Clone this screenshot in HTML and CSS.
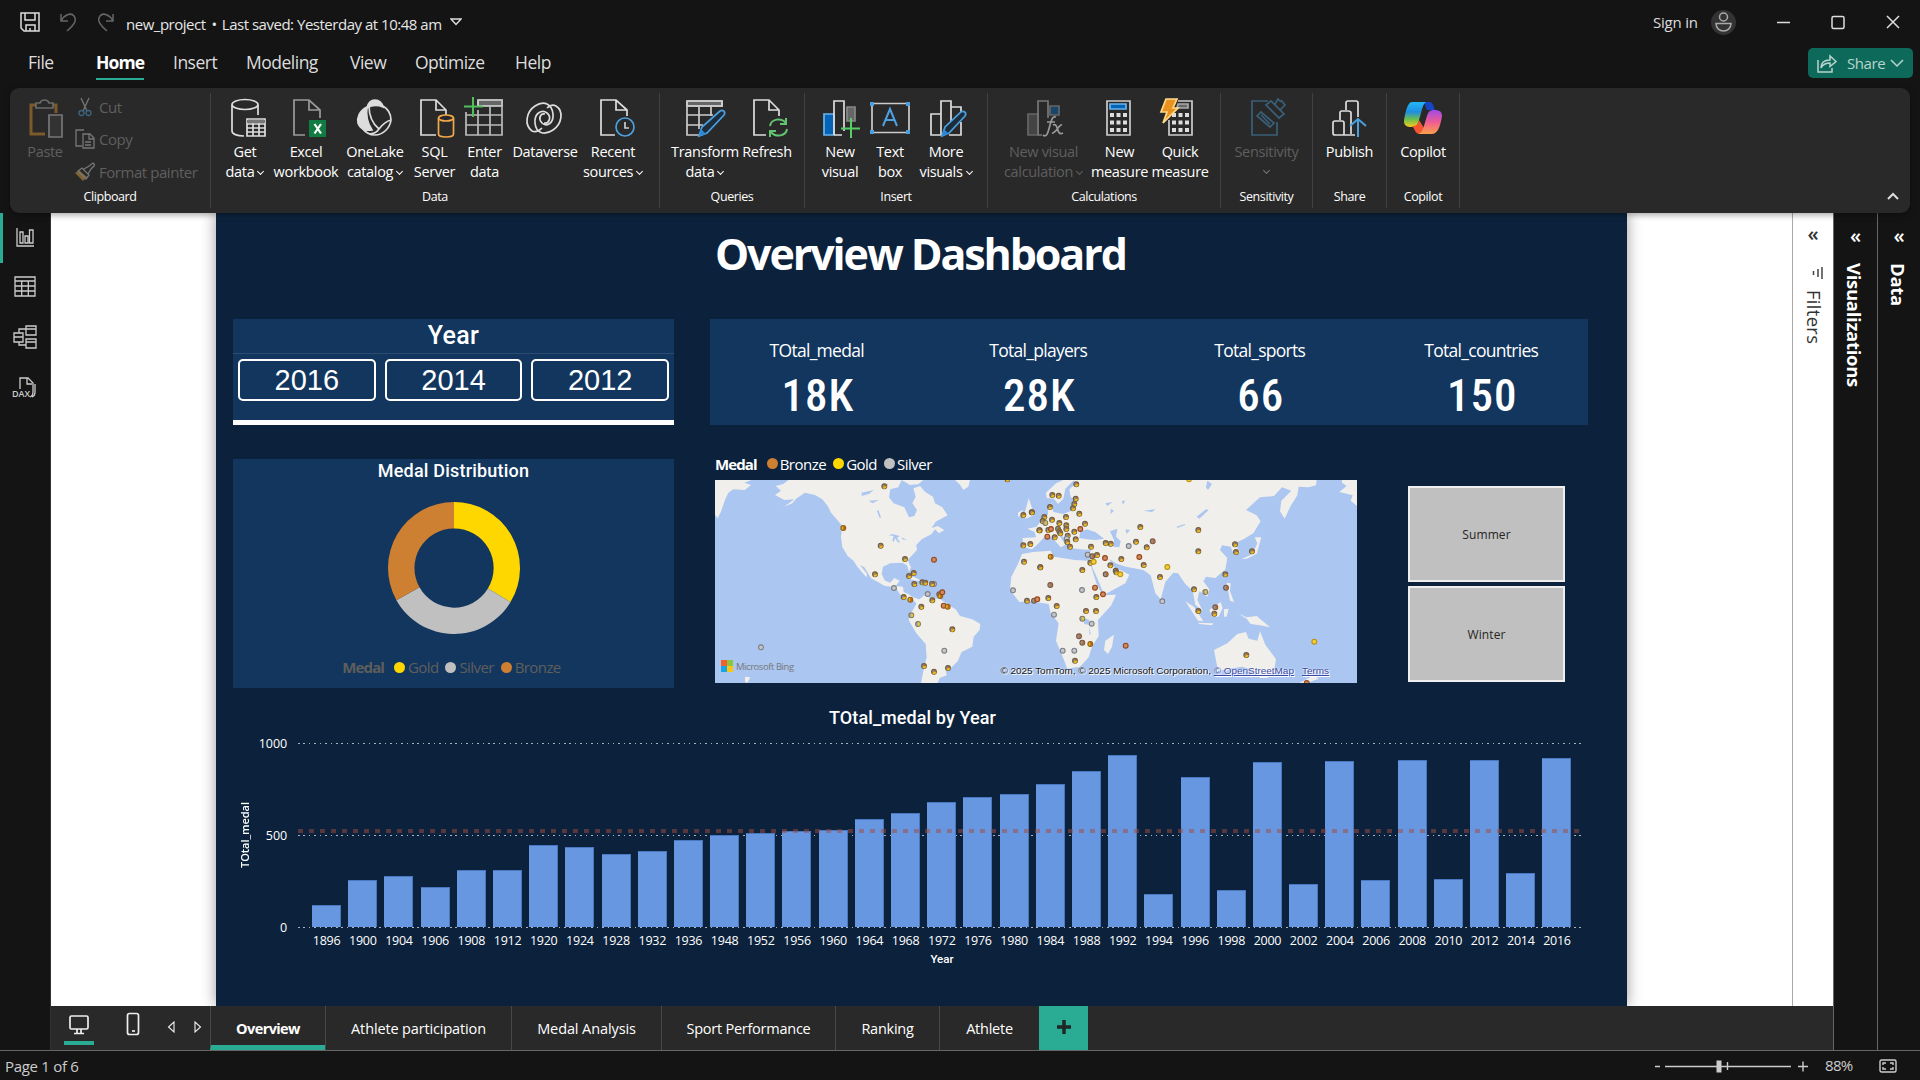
FILE: index.html
```html
<!DOCTYPE html>
<html lang="en">
<head>
<meta charset="utf-8">
<title>new_project</title>
<link rel="stylesheet" href="styles.css">
</head>
<body>
<div class="app">
  <header class="titlebar">
    <svg class="save" viewBox="0 0 20 20"><path d="M1 1h18v18H4l-3-3zM5 1v7h10V1M6 19v-6h9v6M10 19v-3"/></svg>
    <svg class="undo" viewBox="0 0 17 19"><path d="M1 1v7h7M1 8C4 2 11-1 14 3s1 8-7 15"/></svg>
    <svg class="undo redo" viewBox="0 0 17 19"><path d="M1 1v7h7M1 8C4 2 11-1 14 3s1 8-7 15"/></svg>
    <span class="doc">new_project<b>•</b>Last saved: Yesterday at 10:48 am</span>
    <svg class="doc-caret" viewBox="0 0 12 8"><path d="M1 1h10L6 6.500z"/></svg>
    <span class="signin">Sign in</span>
    <svg class="avatar" viewBox="0 0 25 25"><circle cx="12.500" cy="12.500" r="12.500" fill="#333" stroke="none"/><circle cx="12.500" cy="7" r="4" /><path d="M5 13.500h15c0 10-15 10-15 0z"/></svg>
    <svg class="winbtns" viewBox="0 0 124 16"><path d="M1 8.500h13"/><rect x="56" y="2.500" width="12" height="12" rx="1.500"/><path d="M111 2l12 12M123 2l-12 12"/></svg>
  </header>
  <nav class="menu">
    <span class="m-file">File</span><span class="m-home">Home</span><span class="m-insert">Insert</span><span class="m-model">Modeling</span><span class="m-view">View</span><span class="m-opt">Optimize</span><span class="m-help">Help</span>
    <button class="share">
      <svg width="20" height="19" viewBox="0 0 20 19"><path d="M1 6v12h14v-4M4 14c0-6 4-8 9-8V2l6 5.500-6 5V9c-4 0-7 1-9 5z"/></svg>
      <span>Share</span>
      <svg width="14" height="9" viewBox="0 0 14 9"><path d="M1 1l6 6 6-6"/></svg>
    </button>
  </nav>

  <section class="ribbon">
    <div class="group g-clip">
      <div class="items">
        <div class="cmd w70 dim">
          <svg viewBox="0 0 40 40"><path d="M12 7H6v29h14M26 7h5v8" stroke="#7d5a2a" stroke-width="3"/><path d="M11 10V5h4c1-4 8-4 9 0h4v5z" stroke="#6a6a6a" fill="#292929"/><path d="M24 17h13v22H24z" stroke="#777" fill="#333"/></svg>
          <span>Paste</span>
        </div>
        <div class="small dim">
          <div><svg viewBox="0 0 20 20"><path d="M6 1l6 13M14 1L8 14" stroke="#777"/><circle cx="6.500" cy="16" r="2.500" stroke="#3b6680"/><circle cx="13.500" cy="16" r="2.500" stroke="#3b6680"/></svg><span>Cut</span></div>
          <div><svg viewBox="0 0 20 20"><path d="M7 17H1V1h8M8 5h7l4 4v10H8zM14 5v5h5M10 13h6M10 16h6" stroke="#777"/></svg><span>Copy</span></div>
          <div><svg viewBox="0 0 20 20"><path d="M1 11l7 7 3-3-7-6z" fill="#806331" stroke="#806331"/><path d="M3 9l4-3 7 7-3 4zM9 7l5-3 4-3 2 2-4 4-3 5" stroke="#777"/></svg><span>Format painter</span></div>
        </div>
      </div>
      <div class="gname">Clipboard</div>
    </div>

    <div class="group g-data">
      <div class="items">
        <div class="cmd w60"><svg viewBox="-3 0 40 40"><ellipse cx="17" cy="6.500" rx="13" ry="5"/><path d="M4 7v26c0 3 5 5 12 5M30 7v10"/><path d="M19 21h18v17H19zM19 26h18M19 30h18M19 34h18M25 22v16M31 22v16" fill="#292929"/><path d="M19 22h18v3H19z" fill="#777" stroke="none"/></svg><span>Get</span><span>data<i></i></span></div>
        <div class="cmd w62"><svg viewBox="-2 0 40 40"><path d="M17 37H6V2h15l11 10v8M21 2v10h11" stroke="#9a9a9a"/><path d="M21 22h17v17H21z" fill="#107c41" stroke="none"/><path d="M26.500 26l6.500 9.500M33 26l-6.500 9.500" stroke="#fff" stroke-width="2.200"/></svg><span>Excel</span><span>workbook</span></div>
        <div class="cmd w76"><svg viewBox="0 0 40 40"><path d="M12 10C13 5 16 2 20 2s7 3 8 7c-5-2-11-2-16 1z" fill="#ddd"/><path d="M12 9C4 13 2 20 3 25c2 6 8 8 14 7C12 25 11 16 12 9z" fill="#ddd"/><path d="M28 8c5 3 8 8 8 14-1 8-8 15-16 15-5 0-10-3-13-7M14 8c0 10 4 18 10 23 3-4 8-8 12-9M24 31c-2 3-6 5-10 5"/></svg><span>OneLake</span><span>catalog<i></i></span></div>
        <div class="cmd w43"><svg viewBox="-1 0 40 40"><path d="M20 37H5V2h15l10 10v5M20 2v10h10"/><g stroke="#f2a94b"><ellipse cx="30" cy="20" rx="7.500" ry="3"/><path d="M22.500 20v16c0 4 15 4 15 0V20"/></g></svg><span>SQL</span><span>Server</span></div>
        <div class="cmd w57"><svg viewBox="1 0 40 40"><path d="M14 2h24v6H14z" fill="#666"/><path d="M2 14v23h36V2H14M2 17h36M2 27h36M14 12v25M26 8v29" stroke="#bbb"/><path d="M9-1v20M0 8.500h19" stroke="#4fc05c" stroke-width="2"/></svg><span>Enter</span><span>data</span></div>
        <div class="cmd w64"><svg viewBox="1 0 40 40"><path d="M8 33C0 27 2 14 11 8s17-2 18 8-7 13-11 9-2-10 3-9M32 8c8 5 6 18-3 24s-17 3-18-7 7-14 12-10 2 11-3 10M8 33c4 2 8-1 10-3M32 8c-4-2-7 0-9 2"/></svg><span>Dataverse</span></div>
        <div class="cmd w72"><svg viewBox="-3 0 40 40"><path d="M19 37H5V2h15l11 10v6M20 2v10h11"/><circle cx="29" cy="29" r="9" stroke="#4ba0e0"/><path d="M29 24v6h4" stroke="#ccc"/></svg><span>Recent</span><span>sources<i></i></span></div>
      </div>
      <div class="gname">Data</div>
    </div>

    <div class="group g-quer">
      <div class="items">
        <div class="cmd w80"><svg viewBox="0 0 40 40"><path d="M2 3h35v5H2z" fill="#666"/><path d="M2 3h35v6M2 3v34h12M2 8h35M2 17h26M2 27h16M14 8v23M26 8v10" stroke="#ccc"/><path d="M14 38l3-9 18-16c3-2 6 1 4 4L22 35z" stroke="#4ba0e0" fill="#1d2d3c"/><path d="M14 38l2-7 5 5z" fill="#2b88d8" stroke="none"/></svg><span>Transform</span><span>data<i></i></span></div>
        <div class="cmd w44"><svg viewBox="-2 0 40 40"><path d="M17 37H5V2h15l10 10v6M20 2v10h10"/><g stroke="#62c370" stroke-width="2"><path d="M21 28c1-7 11-9 16-3M37 20v6h-6M38 31c-1 7-11 9-16 3M21 39v-6h6"/></g></svg><span>Refresh</span></div>
      </div>
      <div class="gname">Queries</div>
    </div>

    <div class="group g-ins">
      <div class="items">
        <div class="cmd w50"><svg viewBox="0 0 40 40"><path d="M27 9h8v14h-8z" fill="#666" stroke="#888"/><path d="M4 16h10v21H4z" fill="#0563b5" stroke="#6ab4ee"/><path d="M14 37V3h10v30M14 37h8"/><path d="M31 20v20M21 30.500h19" stroke="#55cf66" stroke-width="2"/></svg><span>New</span><span>visual</span></div>
        <div class="cmd w50"><svg viewBox="0 0 40 40"><path d="M2 5.500h37v29H2z" stroke="#ccc"/><g fill="#4ba0e0" stroke="none"><path d="M0 4h4v4H0zM36 4h4v4h-4zM0 32h4v4H0zM36 32h4v4h-4z"/></g><path d="M13 28l7-17 7 17M15 22h10" stroke="#4ba0e0" stroke-width="2"/></svg><span>Text</span><span>box</span></div>
        <div class="cmd w62"><svg viewBox="-1 0 40 40"><path d="M4 16h10v21H4zM14 37V3h10v20M24 9h10v6M34 24v13H22"/><path d="M15 38l3-9 16-15c3-2 6 1 4 4L22 35z" stroke="#4ba0e0" fill="#1d2d3c"/><path d="M15 38l2-7 5 5z" fill="#2b88d8" stroke="none"/></svg><span>More</span><span>visuals<i></i></span></div>
      </div>
      <div class="gname">Insert</div>
    </div>

    <div class="group g-calc">
      <div class="items">
        <div class="cmd w111 dim"><svg viewBox="0 0 40 40"><path d="M26 8h9v9h-9z" fill="#18466b" stroke="#666"/><path d="M4 16h10v21H4z" fill="#444" stroke="#666"/><path d="M14 37V3h10v17M14 37h4" stroke="#777"/><path d="M19 37c4 3 5-3 7-10s3-9 6-8M23 24h8M29 27c6-3 3 12 10 8M38 27c-3-1-6 9-10 8" stroke="#999"/></svg><span>New visual</span><span>calculation<i></i></span></div>
        <div class="cmd w41"><svg viewBox="1 0 40 40"><path d="M8 3h23v34H8z" stroke="#ccc"/><path d="M11 6h16v5H11z" fill="#0563b5" stroke="#6ab4ee"/><path d="M13 15v21M19.500 15v21M26 15v21" stroke="#ddd" stroke-width="4" stroke-dasharray="4 3.500"/></svg><span>New</span><span>measure</span></div>
        <div class="cmd w80"><svg viewBox="0 0 40 40"><path d="M9 22v15h23V3H18" stroke="#ccc"/><path d="M18 6h10v4H17z" fill="#666" stroke="#aaa"/><path d="M14 15v21M20.500 15v21M27 15v21" stroke="#ddd" stroke-width="4" stroke-dasharray="4 3.500"/><path d="M6 1h11l-4 9h5L3 25l4-11H1z" fill="#e9921d" stroke="#ffd98a"/></svg><span>Quick</span><span>measure</span></div>
      </div>
      <div class="gname">Calculations</div>
    </div>

    <div class="group g-sens">
      <div class="items">
        <div class="cmd w91 dim"><svg viewBox="-1 0 40 40"><g stroke="#3a5f78"><path d="M20 3H4v34h25V24"/><path d="M9 18l4-4 13 11-4 4zM13 17l9 9M18 7l5-4 13 13-5 4zM27 6l3-5 3 3M32 12l5-5-4-5"/></g></svg><span>Sensitivity</span><span><i class="solo"></i></span></div>
      </div>
      <div class="gname">Sensitivity</div>
    </div>
    <div class="group g-share">
      <div class="items">
        <div class="cmd w73"><svg viewBox="0 0 40 40"><path d="M16 12V5q0-2 2-2h8q2 0 2 2v14M10 22v-7q0-2 2-2h6q3 0 3 2v21M5 23h7q2 0 2 2v12H5q-2 0-2-2V25q0-2 2-2zM14 37h11"/><path d="M28 39V21M20 28l8-7 8 7" stroke="#4ba0e0" stroke-width="2"/></svg><span>Publish</span></div>
      </div>
      <div class="gname">Share</div>
    </div>
    <div class="group g-cop">
      <div class="items">
        <div class="cmd w72"><svg viewBox="0 0 40 40"><defs><linearGradient id="ca" x1="0" y1="0" x2="0" y2="1"><stop offset="0" stop-color="#22b8f5"/><stop offset=".4" stop-color="#1f8ee0"/><stop offset=".7" stop-color="#6cc04a"/><stop offset="1" stop-color="#f6c820"/></linearGradient><linearGradient id="cb" x1="0" y1="0" x2="0" y2="1"><stop offset="0" stop-color="#a04be8"/><stop offset=".5" stop-color="#ee5c93"/><stop offset="1" stop-color="#fba14a"/></linearGradient></defs><g stroke="none"><path d="M21 4h6c3 0 3 4 5 8h-8z" fill="#1646c8"/><path d="M9 4h14c-4 3-4 9-7 18-1 5-3 7-7 7-6 0-8-2-8-6C2 17 4 4 9 4z" fill="url(#ca)"/><path d="M9 28c5 0 6-2 7-6l5 8-4 6c-5 0-5-5-8-8z" fill="#f4552e"/><path d="M31 12c6 0 8 2 8 6-1 6-3 18-10 18H15c5-1 6-9 9-18 1-4 3-6 7-6z" fill="url(#cb)"/></g></svg><span>Copilot</span></div>
      </div>
      <div class="gname">Copilot</div>
    </div>
    <svg class="collapse" viewBox="0 0 12 8"><path d="M1 7l5-5 5 5"/></svg>
  </section>

  <div class="body">
    <aside class="rail">
      <div class="rail-item on"><svg viewBox="0 0 24 24"><path d="M4 3v18h17M7 18V7h3v11zM12 18v-7h3v7zM16.500 18V5h3.500v13z"/></svg></div>
      <div class="rail-item"><svg viewBox="0 0 24 24"><path d="M2 2h20v19H2zM2 6h20M2 11h20M2 16h20M8.700 6v15M15.300 6v15"/></svg></div>
      <div class="rail-item"><svg viewBox="0 0 24 24"><path d="M1 8h9v9H1zM1 12h9M13 1h10v9H13zM13 4h10M13 14h10v9H13zM13 17h10M6 8V4h7M6 17v3h7"/></svg></div>
      <div class="rail-item dax"><svg viewBox="0 0 24 24"><path d="M7 15V2h8l5 5v9q0 4-3 5M14 2v6h5M22 8v8q0 4-3 5"/></svg><b>DAX</b></div>
    </aside>

    <div class="center">
      <div class="work">
        <div class="canvas">
          <main class="page">
            <h1>Overview Dashboard</h1>
            <div class="row top">
              <section class="year">
                <h2>Year</h2>
                <div class="chips"><span>2016</span><span>2014</span><span>2012</span></div>
              </section>
              <section class="kpis">
                <div><span>TOtal_medal</span><b>18K</b></div>
                <div><span>Total_players</span><b>28K</b></div>
                <div><span>Total_sports</span><b>66</b></div>
                <div><span>Total_countries</span><b>150</b></div>
              </section>
            </div>
            <div class="row mid">
              <section class="dist">
                <h3>Medal Distribution</h3>
                <svg class="donut" width="134" height="134" viewBox="-67 -67 134 134">
                  <path fill="#ffd700" d="M0-66A66 66 0 0 1 56.500 34.100L33.900 20.500A39.500 39.500 0 0 0 0-39.500z"/>
                  <path fill="#c0c0c0" d="M56.500 34.100A66 66 0 0 1-57.600 32.200L-34.500 19.300A39.500 39.500 0 0 0 33.900 20.500z"/>
                  <path fill="#cd7f32" d="M-57.600 32.200A66 66 0 0 1 0-66V-39.500A39.500 39.500 0 0 0-34.500 19.300z"/>
                </svg>
                <div class="legend"><b>Medal</b><i class="gold"></i>Gold<i class="silver"></i>Silver<i class="bronze"></i>Bronze</div>
              </section>
              <section class="mapbox">
                <div class="legend light"><b>Medal</b><i class="bronze"></i>Bronze<i class="gold"></i>Gold<i class="silver"></i>Silver</div>
                <div class="map">
                  <svg width="642" height="203" viewBox="0 0 642 203">
                    <rect width="642" height="203" fill="#abc6f1"/>
                    <g fill="#f0efeb" transform="scale(.33333) translate(-30 -90)">
                      <path d="M30 90H140L118 98 138 105 120 120 85 118 70 128 60 150 48 185 38 205 30 195z"/>
                      <path d="M250 90L235 102 212 108 228 122 210 135 238 150 268 148 235 172 215 180 262 160 275 145 300 128 330 135 352 148 368 168 378 188 395 208 412 228 408 260 412 292 428 318 446 333 458 352 484 382 486 372 465 345 478 352 498 385 540 408 572 412 584 432 600 446 622 448 636 462 648 450 624 442 610 432 596 426 594 410 572 408 584 392 568 384 556 398 540 392 530 372 534 350 556 340 592 338 606 346 612 366 618 352 608 330 636 300 634 285 650 268 680 252 690 238 702 250 718 240 698 228 680 234 692 215 728 196 712 172 690 160 684 140 660 125 645 108 625 115 632 140 622 160 636 180 628 198 612 202 598 172 566 160 552 142 556 118 580 112 590 90z"/>
                      <path d="M590 90H655L640 103 615 105zM750 90H795L790 110 775 120 765 104zM890 90H920L905 92zM604 385L625 380 650 392 632 392zM650 395L690 400 672 406z"/>
                      <path d="M638 452L658 436 676 444 704 446 732 466 752 478 765 498 802 508 826 522 824 540 806 560 802 590 770 606 758 634 738 654 722 656 725 676 704 684 698 699H648L654 668 665 622 662 582 634 550 612 512 612 492 624 480z"/>
                      <path d="M120 680l16 2-8 16-8-2z"/>
                    </g>
                    <g fill="#abc6f1" transform="scale(.33333) translate(-30 -90)">
                      <path d="M470 128l36-8-14 12-22 6zM492 152l30-2-20 10zM520 180l8 22-4 2-8-20zM562 252l22 6-8 6 10 14-8-2-8-12-4 12-4-4 4-14-14-2zM590 262l16 8-14-2zM530 110l20-10-10 16z"/>
                    </g>
                    <g fill="#f0efeb" transform="translate(315 -30) scale(.33333)">
                      <path d="M-22 264L18 262 14 246 -8 236 20 230 38 204 54 194 54 166 66 160 70 186 100 192 124 182 128 164 148 150 122 142 118 118 140 98 130 92 106 116 100 146 84 162 72 146 50 144 48 128 78 100 100 90H860L858 106 836 112 806 110 802 136 782 168 764 206 750 184 754 152 784 122 756 112 732 138 690 142 648 180 680 196 692 214 670 250 640 268 614 280 630 306 612 314 602 290 576 286 570 300 592 324 586 358 556 384 528 380 520 394 538 418 532 440 508 424 502 450 518 482 496 464 488 422 466 402 444 370 430 368 406 396 392 448 376 430 362 376 340 360 288 350 262 342 238 328 254 354 276 362 298 374 286 400 222 434 204 390 184 345 178 322 182 300 150 298 122 294 106 268 84 246 92 262 106 284 92 292 66 262 42 262 26 280 6 298 -20 292z"/>
                      <path d="M-24 312L10 306 62 302 72 320 112 326 134 330 174 332 184 352 200 402 218 436 258 434 244 466 204 510 206 558 186 590 176 622 150 650 112 656 98 620 78 572 86 520 62 490 56 462 0 454 -32 456 -60 420 -56 380 -36 342z"/>
                      <path d="M226 572L252 554 246 590 234 612 222 600zM466 454L492 470 520 514 504 512zM504 518L550 520 546 526 508 522zM538 480L572 456 578 474 566 500 546 500zM582 478L596 476 590 500 582 500zM624 490L650 502 680 498 720 532 690 526 662 522 650 506zM634 328L668 312 682 280 674 262 694 262 686 290 680 312 650 326zM590 398L602 400 600 424 612 456 600 452zM392 448l10 4-4 12-8-2zM584 358l4 8-4 10z"/>
                      <path d="M552 600L592 580 622 552 648 546 656 566 682 572 690 544 706 584 738 628 732 664 712 684 690 684 668 660 636 650 600 656 564 662zM852 676L866 686 830 699H808zM-20 200L-10 168 -4 144 8 180 12 196 -14 206zM-36 188l14-8-2 16-12 4z"/>
                      <path d="M936 90H981V168L962 152 968 136 928 126 950 108 936 98z"/>
                    </g>
                    <g fill="#abc6f1" transform="translate(315 -30) scale(.33333)">
                      <path d="M148 264L150 246 170 238 196 246 222 266 196 270 170 268zM240 244L262 236 258 260 272 274 268 292 250 290 252 270zM286 238l14 2-10 12zM226 160l22-4-16 12zM242 176l10 6-10 10zM500 200l28-22 8 2-28 26zM340 182l36-4-10 8zM276 152l10 0-8 12zM532 92l14 10-12 18-6-8zM162 505l16 4-2 16-14-4zM178 528l4 26-4-2zM440 230l24-8 2 3-24 9z"/>
                    </g>
                    <g id="markers"></g>
                  </svg>
                  <div class="bing"><svg width="12" height="12" viewBox="0 0 12 12"><path fill="#f0612e" d="M0 0h6v6H0z"/><path fill="#8cc63e" d="M6 0h6v6H6z"/><path fill="#16a5e6" d="M0 6h6v6H0z"/><path fill="#fdc50f" d="M6 6h6v6H6z"/></svg>Microsoft Bing</div>
                  <div class="credit">© 2025 TomTom, © 2025 Microsoft Corporation, <u>© OpenStreetMap</u><u class="terms">Terms</u></div>
                </div>
              </section>
              <section class="tiles"><div>Summer</div><div>Winter</div></section>
            </div>
            <section class="chart">
              <h3>TOtal_medal by Year</h3>
              <div class="chart-body">
                <div class="ytitle">TOtal_medal</div>
                <div class="yticks"><span>1000</span><span>500</span><span>0</span></div>
                <div class="plot">
                  <div class="gridlines"><i></i><i></i></div>
                  <div class="bars" id="bars"></div>
                  <div class="baseline"></div>
                  <div class="avg"></div>
                </div>
              </div>
              <div class="xlabels" id="xlabels"></div>
              <div class="xtitle">Year</div>
            </section>
          </main>
        </div>
        <aside class="filters">
          <span class="chev">«</span>
          <svg width="12" height="14" viewBox="0 0 12 14"><path d="M11 1v12M7 3v8M2.500 5v4"/></svg>
          <span class="vt">Filters</span>
        </aside>
      </div>
      <footer class="tabs">
        <div class="views">
          <div class="desk"><svg width="20" height="20" viewBox="0 0 20 20"><rect x="1" y="1" width="18" height="13" rx="1.500"/><path d="M8 14v4M12 14v4M5 18.500h10"/></svg></div>
          <svg class="phone" viewBox="0 0 14 24"><rect x="1.500" y="1.500" width="11" height="21" rx="2"/><path d="M6 19h3"/></svg>
          <svg class="arr" viewBox="0 0 8 12"><path d="M7 1v10L1.500 6z"/></svg>
          <svg class="arr" viewBox="0 0 8 12"><path d="M1 1v10l5.500-5z"/></svg>
        </div>
        <span class="tab t1">Overview</span><span class="tab t2">Athlete participation</span><span class="tab t3">Medal Analysis</span><span class="tab t4">Sport Performance</span><span class="tab t5">Ranking</span><span class="tab t6">Athlete</span>
        <span class="plus"><svg width="14" height="14" viewBox="0 0 14 14"><path d="M7 0v14M0 7h14"/></svg></span>
      </footer>
    </div>
    <aside class="pane"><span class="chev">«</span><span class="vt">Visualizations</span></aside>
    <aside class="pane last"><span class="chev">«</span><span class="vt">Data</span></aside>
  </div>

  <footer class="status">
    <span>Page 1 of 6</span>
    <div class="zoom">
      <svg width="154" height="16" viewBox="0 0 154 16"><path d="M1 8.500h5M11 8.500h126M144 8.500h10M149 3.500v10M73.500 4v8"/><path d="M65 2.500v12" stroke-width="5"/></svg>
      <span>88%</span>
      <svg width="18" height="14" viewBox="0 0 18 14"><rect x="1" y="1" width="16" height="12" rx="1.500"/><path d="M4 6V4h3M14 6V4h-3M4 8v2h3M14 8v2h-3"/></svg>
    </div>
  </footer>
</div>
<script src="app.js"></script>
</body>
</html>
```
FILE: styles.css
```css
* { box-sizing: border-box; }
body { margin: 0; background: #141414; color: #fff; font-family: "Open Sans", "Noto Sans", sans-serif; overflow: hidden; }
svg { fill: none; display: block; flex: none; }
h1, h2, h3 { margin: 0; }
.app { width: 1920px; height: 1080px; display: flex; flex-direction: column; }

.titlebar { height: 44px; display: flex; align-items: center; padding-left: 20px; flex: none; }
.titlebar svg { stroke: #ddd; stroke-width: 1.500; }
.save { width: 20px; height: 20px; }
.titlebar .undo { width: 17px; height: 19px; margin-left: 20px; stroke: #666; }
.titlebar .redo { transform: scaleX(-1); }
.doc { margin-left: 12px; margin-top: 4px; width: 316px; font-size: 15px; letter-spacing: -.48px; color: #e6e6e6; white-space: nowrap; }
.doc b { font-weight: 400; margin: 0 5px 0 6px; }
.doc-caret { width: 12px; height: 8px; margin-left: 8px; }
.signin { margin-left: 1191px; width: 47px; font-size: 15px; letter-spacing: -.2px; color: #ddd; white-space: nowrap; }
.titlebar .avatar { width: 25px; height: 25px; margin-left: 11px; stroke: #aaa; }
.winbtns { width: 124px; height: 16px; margin-left: 40px; }

.menu { height: 44px; display: flex; align-items: flex-start; flex: none; font-size: 17.500px; letter-spacing: -.5px; color: #ddd; padding-left: 28px; }
.menu > span { height: 36px; line-height: 37px; white-space: nowrap; margin-right: 30px; }
.m-file { width: 38px; }
.menu .m-home { width: 48px; font-weight: 700; color: #fff; border-bottom: 2px solid #2aab93; letter-spacing: -.9px; margin-right: 29px; }
.m-insert { width: 43px; }
.m-model { width: 74px; }
.m-view { width: 35px; }
.m-opt { width: 70px; }
.m-help { width: 36px; }
.share { margin: 4px 7px 0 auto; width: 105px; height: 30px; border: 0; border-radius: 5px; background: #0d6a5a; color: #b9d3cd; display: flex; align-items: center; padding: 0 0 0 9px; font: 15px "Open Sans", sans-serif; letter-spacing: -.4px; }
.share svg { stroke: #b9d3cd; stroke-width: 1.500; }
.share span { margin: 0 5px 0 10px; width: 38px; }

.ribbon { margin: 0 10px; height: 125px; background: #292929; border-radius: 9px; display: flex; flex: none; z-index: 2; box-shadow: 0 2px 6px rgba(0,0,0,.35); }
.group { margin: 5px 0; height: 115px; border-right: 1px solid #404040; display: flex; flex-direction: column; flex: none; }
.items { display: flex; height: 93px; padding-top: 5px; }
.gname { text-align: center; font-size: 12.500px; letter-spacing: -.4px; line-height: 22px; }
.g-clip { width: 201px; } .g-data { width: 449px; } .g-quer { width: 145px; } .g-ins { width: 183px; }
.g-calc { width: 233px; } .g-sens { width: 92px; } .g-share { width: 74px; } .g-cop { width: 73px; }
.g-data .items { padding-left: 4px; } .g-quer .items { padding-left: 5px; } .g-ins .items { padding-left: 10px; }
.cmd { display: flex; flex-direction: column; align-items: center; font-size: 14.500px; letter-spacing: -.33px; line-height: 20px; flex: none; }
.cmd svg { width: 40px; height: 40px; margin-bottom: 4px; stroke: #ddd; stroke-width: 1.700; overflow: visible; }
.cmd span { white-space: nowrap; }
.cmd span i { display: inline-block; width: 5px; height: 5px; border: solid currentColor; border-width: 0 1.500px 1.500px 0; transform: rotate(45deg); margin: 0 1px 3px 4px; }
.cmd span i.solo { margin: 0 0 4px; color: #777; }
.dim { color: #5f5f5f; }
.w41 { width: 41px; } .w43 { width: 43px; } .w44 { width: 44px; } .w50 { width: 50px; } .w57 { width: 57px; } .w60 { width: 60px; }
.w62 { width: 62px; } .w64 { width: 64px; } .w70 { width: 70px; } .w72 { width: 72px; } .w73 { width: 73px; } .w76 { width: 76px; }
.w80 { width: 80px; } .w91 { width: 91px; } .w111 { width: 111px; }
.small { display: flex; flex-direction: column; font-size: 15px; letter-spacing: -.45px; margin-left: -5px; }
.small div { display: flex; align-items: center; margin-top: -1px; gap: 4px; white-space: nowrap; }
.small div:first-child { height: 20px; }
.small div:nth-child(2) { height: 46px; }
.small div:nth-child(3) { height: 22px; }
.small svg { width: 20px; height: 20px; stroke-width: 1.300; }
.collapse { width: 12px; height: 8px; margin: 104px 11px 0 auto; stroke: #ddd; stroke-width: 2; }

.body { display: flex; height: 837px; flex: none; }
.rail { width: 51px; border-right: 1px solid #333; }
.rail-item { height: 50px; padding: 0 0 3px 10px; display: flex; align-items: center; border-left: 3px solid transparent; position: relative; }
.rail-item.on { border-color: #2aab93; }
.rail-item svg { width: 24px; height: 24px; stroke: #ccc; stroke-width: 1.300; }
.rail-item.dax { padding-bottom: 1px; }
.dax b { position: absolute; left: 9px; top: 26px; font: 600 9px "Open Sans", sans-serif; background: #141414; color: #ccc; line-height: 9px; }

.center { width: 1782px; display: flex; flex-direction: column; }
.work { display: flex; height: 793px; }
.canvas { width: 1741px; background: #fff; padding: 0 165px; overflow: hidden; }
.page { width: 1411px; height: 793px; background: #0c223c; box-shadow: 0 0 14px rgba(0,0,0,.4); padding: 0 39px 0 17px; }
.page h1 { height: 106px; padding-left: 482px; line-height: 82px; font-size: 43px; font-weight: 700; letter-spacing: -2.100px; white-space: nowrap; }
.row { display: flex; }
.top { height: 106px; margin-bottom: 34px; }
.mid { height: 229px; }
.year { width: 441px; background: #12365e; border-bottom: 5px solid #fff; margin-right: 36px; }
.year h2 { height: 35px; text-align: center; font: 500 25px/34px Roboto, sans-serif; font-stretch: 90%; letter-spacing: .3px; border-bottom: 1px solid #2b4b70; }
.chips { display: flex; gap: 9px; padding: 5px; }
.chips span { flex: 1; height: 42px; border: 2px solid #fff; border-radius: 5px; text-align: center; font: 29px/38px "Liberation Sans", sans-serif; }
.kpis { width: 878px; background: #12365e; display: flex; justify-content: center; }
.kpis div { width: 221.500px; display: flex; flex-direction: column; align-items: center; flex: none; padding-top: 18px; }
.kpis span { font-size: 17.500px; letter-spacing: -.72px; line-height: 26px; }
.kpis b { font: 500 45px/65px Roboto, sans-serif; font-stretch: 85%; letter-spacing: 1px; padding-left: 2px; }
.dist { width: 441px; background: #12365e; display: flex; flex-direction: column; align-items: center; margin-right: 41px; }
.dist h3 { font: 500 18px/23px Roboto, sans-serif; letter-spacing: .2px; }
.donut { margin-top: 19px; }
.legend { display: flex; align-items: center; font-size: 15px; letter-spacing: -.5px; line-height: 20px; color: #605e5c; white-space: nowrap; }
.dist .legend { margin-top: 22px; margin-right: 4px; letter-spacing: -.6px; }
.legend i { width: 11px; height: 11px; border-radius: 50%; margin: 0 3px 0 7px; }
.legend b { margin-right: 3px; letter-spacing: -.9px; }
.light { color: #fff; height: 21px; margin-top: -6px; margin-bottom: 6px; }
.light i { margin-right: 2px; }
.gold { background: #ffd700; } .silver { background: #c0c0c0; } .bronze { background: #cd7f32; }
.mapbox { width: 642px; margin-right: 51px; }
.map { position: relative; width: 642px; height: 203px; overflow: hidden; }
.bing { position: absolute; left: 6px; top: 180px; display: flex; gap: 3px; font-size: 9.500px; letter-spacing: -.45px; line-height: 14px; color: #777; white-space: nowrap; }
.credit { position: absolute; right: 28px; top: 184px; font: 9.950px/13px "Liberation Sans", sans-serif; color: #111; text-shadow: 0 0 2px #fff, 1px 1px 0 #fff; white-space: nowrap; }
.credit u { color: #3b4ba5; }
.terms { margin-left: 8px; }
.tiles { width: 157px; padding-top: 27px; }
.tiles div { height: 96px; margin-bottom: 4px; background: #c0c0c0; border: 2px solid #eee; color: #252423; font-size: 12px; display: flex; align-items: center; justify-content: center; letter-spacing: .1px; }

.chart h3 { font: 500 18px/24px Roboto, sans-serif; text-align: center; margin: 18px 0 13px 4px; letter-spacing: .1px; }
.chart-body { display: flex; height: 185px; }
.ytitle { writing-mode: vertical-rl; transform: rotate(180deg); font-size: 11px; font-weight: 600; width: 24px; line-height: 24px; text-align: center; letter-spacing: -.05px; }
.yticks { width: 30px; display: flex; flex-direction: column; justify-content: space-between; align-items: flex-end; margin: -7px 0 -8px; font-size: 12.500px; line-height: 16px; letter-spacing: -.1px; }
.plot { display: grid; width: 1286px; margin-left: 11px; }
.plot > div { grid-area: 1 / 1; }
.gridlines { display: flex; flex-direction: column; justify-content: space-between; height: 93px; }
.gridlines i, .baseline { height: 1px; background: repeating-linear-gradient(90deg, #a9b3bd 0 1.500px, transparent 1.500px 5.430px); }
.baseline { align-self: end; z-index: 1; }
.bars { display: flex; align-items: flex-end; padding: 0 0 1px 14px; gap: 7.190px; }
.bars i { width: 29px; background: #6897e1; border: 1px solid #4a78c0; border-width: 1px 1px 0 0; flex: none; }
.avg { height: 4px; margin-top: 86px; background: repeating-linear-gradient(90deg, rgba(160,75,58,.5) 0 5.500px, transparent 5.500px 11px); z-index: 1; }
.xlabels { display: flex; margin: 4px 0 0 75.500px; font-size: 12.500px; line-height: 17px; letter-spacing: -.25px; }
.xlabels span { width: 36.190px; text-align: center; flex: none; }
.xtitle { text-align: center; font: 500 11.500px/20px Roboto, sans-serif; margin-left: 63px; }

.filters { width: 41px; background: #fff; border-left: 1px solid #aaa; color: #333; display: flex; flex-direction: column; align-items: center; }
.filters svg { stroke: #444; stroke-width: 1.500; margin: 22px 0 0 7px; }
.chev { font-size: 20px; line-height: 20px; height: 20px; margin-top: 13px; font-weight: 600; }
.filters .chev { margin-top: 11px; }
.vt { writing-mode: vertical-rl; font-size: 18.500px; letter-spacing: 0; font-weight: 600; line-height: 22px; }
.filters .vt { margin: 10px 0 0 2px; font-weight: 500; letter-spacing: .3px; }
.pane { width: 44px; border-left: 1px solid #666; display: flex; flex-direction: column; align-items: center; }
.pane .vt { font-weight: 700; margin: 17px 4px 0 0; letter-spacing: -.3px; }
.pane.last { width: 43px; }
.pane.last .vt { margin-right: 2px; }

.tabs { height: 44px; background: #292929; display: flex; font-size: 14.500px; letter-spacing: -.25px; }
.views { width: 159px; display: flex; align-items: flex-start; flex: none; }
.views svg { stroke: #eee; stroke-width: 1.700; }
.desk { width: 30px; height: 39px; margin-left: 13px; padding: 9px 5px 0; border-bottom: 4px solid #2aab93; }
.phone { width: 14px; height: 24px; margin: 6px 0 0 32px; }
.views .arr { width: 8px; height: 12px; margin: 15px 0 0 27px; stroke-width: 1.100; }
.views .arr + .arr { margin-left: 19px; }
.tab { border-left: 1px solid #484848; line-height: 45px; text-align: center; white-space: nowrap; flex: none; }
.t1 { width: 115px; font-weight: 700; letter-spacing: -.6px; border-bottom: 5px solid #2aab93; }
.t2 { width: 186px; letter-spacing: -.14px; } .t3 { width: 150px; letter-spacing: -.1px; } .t4 { width: 174px; } .t5 { width: 104px; } .t6 { width: 100px; }
.plus { width: 49px; background: #2aab93; display: flex; align-items: center; justify-content: center; padding-bottom: 3px; }
.plus svg { stroke: #1e2725; stroke-width: 3.500; }

.status { height: 30px; border-top: 1px solid #666; display: flex; align-items: center; justify-content: space-between; padding: 0 23px 0 5px; font-size: 15px; letter-spacing: -.3px; color: #ccc; }
.zoom { display: flex; align-items: center; }
.zoom svg { stroke: #ccc; stroke-width: 1.400; }
.zoom span { width: 31px; margin: -2px 23px 0 17px; letter-spacing: -.7px; }
```
FILE: app.js
```js
// Medal totals for each Games year.
const totals = [[1896,118],[1900,255],[1904,277],[1906,219],[1908,310],[1912,310],[1920,446],[1924,437],[1928,395],[1932,413],[1936,473],[1948,502],[1952,511],[1956,522],[1960,529],[1964,587],[1968,618],[1972,679],[1976,707],[1980,721],[1984,775],[1988,848],[1992,933],[1994,181],[1996,813],[1998,201],[2000,899],[2002,234],[2004,904],[2006,255],[2008,908],[2010,259],[2012,908],[2014,295],[2016,917]];
document.getElementById('bars').innerHTML = totals.map(t => `<i style="height:${t[1] / 10}%"></i>`).join('');
document.getElementById('xlabels').innerHTML = totals.map(t => `<span>${t[0]}</span>`).join('');

// Country markers: m = all three medals, b / s / g = a single medal, h = silver and gold, k = silver and bronze, o = gold and bronze.
const west = 'm538,109 o415,234 m527,287 m600,327 b687,329 m626,369 m612,378 m510,373 m628,402 m652,397 m661,398 s687,402 m681,402 s567,414 s668,432 k703,433 o706,438 b712,427 m596,441 o616,449 m682,451 m649,470 b716,467 o728,470 h619,496 h639,522 m742,538 s168,592 s718,602 m657,648 m687,665 m729,654 m955,195 m980,187 m1004,241 m955,286 m976,282 m957,335 m1006,352 s924,421 m966,452 k987,452 b997,448 m907,88';
const east = 'm139,103 m67,135 m86,137 m137,146 m133,162 m129,175 m60,171 m148,191 m108,201 m43,201 m66,209 m38,213 h46,219 m88,219 m165,221 m109,226 m109,237 m84,236 m88,244 m91,250 b151,237 m133,245 b52,260 m55,240 b63,237 m74,262 m113,257 s110,266 m112,276 m137,268 m120,290 m183,290 m28,241 m6,187 o62,320 m31,352 s173,314 k187,319 m201,315 m181,338 g191,335 b225,324 m241,346 m157,360 k257,362 m259,367 g271,373 k227,373 m227,279 m242,281 s296,288 m318,275 k368,274 m350,292 m331,231 m274,327 b328,321 m341,345 g412,351 m390,381 s397,454 m505,240 m505,304 m615,283 m618,306 m666,304 m586,373 k588,413 m492,418 h526,426 m505,483 k556,472 m553,491 m649,615 g853,575 b287,587 k61,405 s156,420 b195,413 b219,433 m199,441 m55,444 m80,468 s72,494 m168,483 m198,483 h157,506 s185,521 k147,559 k157,578 o181,582 s98,602 s133,602 m135,632 g477,88 b830,699';
const colours = { s: ['#c3c6ca', '#c3c6ca'], b: ['#d08a5c', '#d08a5c'], g: ['#f5cf35', '#f5cf35'], h: ['#a9adb3', '#edc32a'], k: ['#92959c', '#b8693a'], o: ['#e0b01f', '#b8601f'], m: ['#888f99', '#b3641f'] };
const rings = { s: '#7c7f83', b: '#96451a', g: '#b8930f', h: '#7c785a', k: '#77543f', o: '#8f600f', m: '#6f5c38' };
function draw(list, originX) {
  return list.split(' ').map(item => {
    const kind = item[0];
    const [px, py] = item.slice(1).split(',').map(Number);
    const x = (px / 3 + originX).toFixed(1), y = (py / 3 - 30).toFixed(1);
    let mark = `<circle cx="${x}" cy="${y}" r="2.400" fill="${colours[kind][0]}" stroke="${rings[kind]}" stroke-width="1.100"/>`;
    if (colours[kind][0] !== colours[kind][1]) mark += `<path d="M${x} ${y}v-2a2 2 0 0 1 0 4z" fill="${colours[kind][1]}"/>`;
    if (kind === 'm') mark += `<path d="M${x} ${y}h2.300a2.300 2.300 0 0 1-4 1.600z" fill="#eebb14"/>`;
    return mark;
  }).join('');
}
document.getElementById('markers').innerHTML = draw(west, -10) + draw(east, 315);
```
